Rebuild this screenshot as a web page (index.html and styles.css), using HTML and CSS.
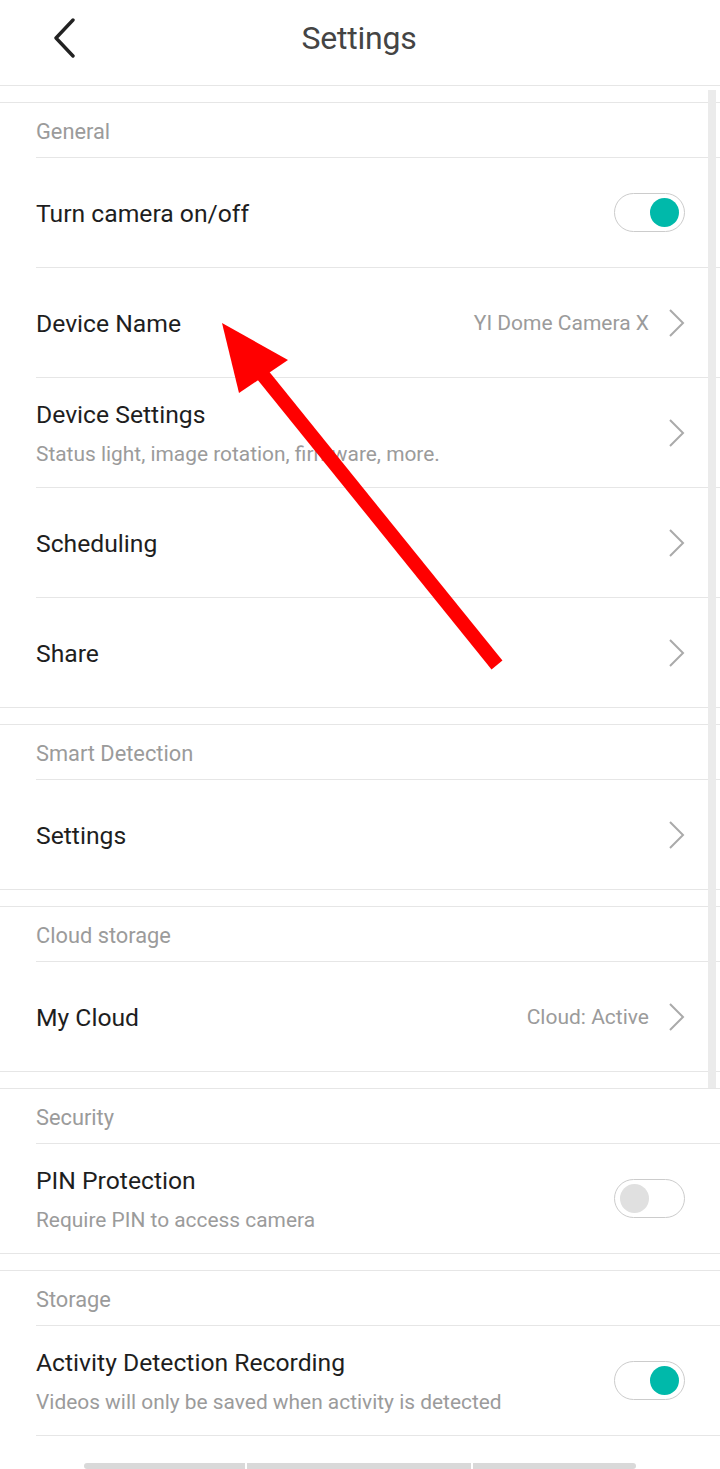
FILE: index.html
```html
<!DOCTYPE html>
<html lang="en">
<head>
<meta charset="utf-8">
<title>Settings</title>
<link rel="stylesheet" href="styles.css">
</head>
<body>
<div class="page">
  <header class="topbar">
    <span class="back">
      <svg width="24" height="40" viewBox="0 0 24 40"><path d="M21 2 L4 20 L21 38" fill="none" stroke="#222" stroke-width="3.4" stroke-linecap="round" stroke-linejoin="round"/></svg>
    </span>
    <h1 class="title">Settings</h1>
  </header>

  <section class="section">
    <div class="label">General</div>
    <div class="row">
      <div class="text"><div class="name">Turn camera on/off</div></div>
      <span class="toggle on"><span class="knob"></span></span>
    </div>
    <div class="row">
      <div class="text"><div class="name">Device Name</div></div>
      <span class="value">YI Dome Camera X</span>
      <svg class="chev" width="18" height="30" viewBox="0 0 18 30"><path d="M2 2 L15 15 L2 28" fill="none" stroke="#aaa" stroke-width="2"/></svg>
    </div>
    <div class="row">
      <div class="text"><div class="name">Device Settings</div><div class="sub">Status light, image rotation, firmware, more.</div></div>
      <svg class="chev" width="18" height="30" viewBox="0 0 18 30"><path d="M2 2 L15 15 L2 28" fill="none" stroke="#aaa" stroke-width="2"/></svg>
    </div>
    <div class="row">
      <div class="text"><div class="name">Scheduling</div></div>
      <svg class="chev" width="18" height="30" viewBox="0 0 18 30"><path d="M2 2 L15 15 L2 28" fill="none" stroke="#aaa" stroke-width="2"/></svg>
    </div>
    <div class="row">
      <div class="text"><div class="name">Share</div></div>
      <svg class="chev" width="18" height="30" viewBox="0 0 18 30"><path d="M2 2 L15 15 L2 28" fill="none" stroke="#aaa" stroke-width="2"/></svg>
    </div>
  </section>

  <section class="section">
    <div class="label">Smart Detection</div>
    <div class="row">
      <div class="text"><div class="name">Settings</div></div>
      <svg class="chev" width="18" height="30" viewBox="0 0 18 30"><path d="M2 2 L15 15 L2 28" fill="none" stroke="#aaa" stroke-width="2"/></svg>
    </div>
  </section>

  <section class="section">
    <div class="label">Cloud storage</div>
    <div class="row">
      <div class="text"><div class="name">My Cloud</div></div>
      <span class="value">Cloud: Active</span>
      <svg class="chev" width="18" height="30" viewBox="0 0 18 30"><path d="M2 2 L15 15 L2 28" fill="none" stroke="#aaa" stroke-width="2"/></svg>
    </div>
  </section>

  <section class="section">
    <div class="label">Security</div>
    <div class="row">
      <div class="text"><div class="name">PIN Protection</div><div class="sub">Require PIN to access camera</div></div>
      <span class="toggle off"><span class="knob"></span></span>
    </div>
  </section>

  <section class="section open">
    <div class="label">Storage</div>
    <div class="row">
      <div class="text"><div class="name">Activity Detection Recording</div><div class="sub">Videos will only be saved when activity is detected</div></div>
      <span class="toggle on"><span class="knob"></span></span>
    </div>
    <div class="row-end"></div>
  </section>
</div>

<div class="scrollbar"></div>

<div class="navbar">
  <span class="seg s1"></span><span class="seg s2"></span><span class="seg s3"></span>
</div>

<svg class="arrow" width="720" height="1469" viewBox="0 0 720 1469">
  <line x1="262" y1="374" x2="497" y2="665" stroke="#ff0000" stroke-width="14"/>
  <polygon points="222,323 288,360 239,393" fill="#ff0000"/>
</svg>
</body>
</html>
```

FILE: styles.css
```css
html, body {
  margin: 0;
  padding: 0;
  background: #fff;
  overflow: hidden;
}
body {
  font-family: Roboto, "Noto Sans", sans-serif;
  width: 720px;
  height: 1469px;
  position: relative;
}
.page {
  display: flex;
  flex-direction: column;
}
.topbar {
  height: 85px;
  border-bottom: 1px solid #e6e6e6;
  display: flex;
  align-items: center;
  justify-content: center;
  position: relative;
}
.back {
  position: absolute;
  left: 52px;
  top: 18px;
  width: 24px;
  height: 40px;
}
.back svg { display: block; }
.title {
  margin: 0;
  font-weight: 400;
  font-size: 32px;
  color: #444;
  letter-spacing: -0.2px;
  margin-top: -9px;
  margin-left: -2px;
}
.section {
  margin-top: 16px;
  border-top: 1px solid #e6e6e6;
  border-bottom: 1px solid #e6e6e6;
}
.section.open { border-bottom: none; }
.label {
  height: 54px;
  padding-left: 36px;
  display: flex;
  align-items: center;
  font-size: 21.8px;
  color: #9b9b9b;
  padding-top: 2px;
  box-sizing: border-box;
}
.row {
  margin-left: 36px;
  border-top: 1px solid #e6e6e6;
  height: 109px;
  display: flex;
  align-items: center;
  padding-right: 36px;
}
.row-end {
  margin-left: 36px;
  border-top: 1px solid #e6e6e6;
  height: 40px;
}
.text {
  flex: 1;
  display: flex;
  flex-direction: column;
}
.name {
  font-size: 24.7px;
  line-height: 30px;
  color: #1e1e1e;
}
.sub {
  font-size: 20.9px;
  line-height: 28px;
  color: #9b9b9b;
  margin-top: 10px;
}
.text { padding-top: 3px; }
.value {
  font-size: 21px;
  color: #9b9b9b;
  margin-right: 19px;
}
.chev { display: block; margin-right: -2px; }
.toggle {
  width: 59px;
  height: 37px;
  border: 1px solid #cccccc;
  border-radius: 20px;
  display: flex;
  align-items: center;
  padding: 0 5px;
  box-sizing: content-box;
  margin-right: -1px;
}
.toggle.on { justify-content: flex-end; }
.toggle.off { justify-content: flex-start; }
.knob {
  width: 29px;
  height: 29px;
  border-radius: 50%;
}
.toggle.on .knob { background: #00b9aa; }
.toggle.off .knob { background: #e0e0e0; }
.scrollbar {
  position: absolute;
  right: 4px;
  top: 90px;
  width: 8px;
  height: 998px;
  background: #ebebeb;
}
.navbar {
  position: absolute;
  left: 84px;
  top: 1463px;
  display: flex;
  gap: 2px;
}
.seg {
  height: 6px;
  background: #d9d9d9;
  display: block;
}
.s1 { width: 161px; border-radius: 3px 0 0 3px; }
.s2 { width: 224px; }
.s3 { width: 163px; border-radius: 0 3px 3px 0; }
.arrow {
  position: absolute;
  left: 0;
  top: 0;
  pointer-events: none;
}
```
